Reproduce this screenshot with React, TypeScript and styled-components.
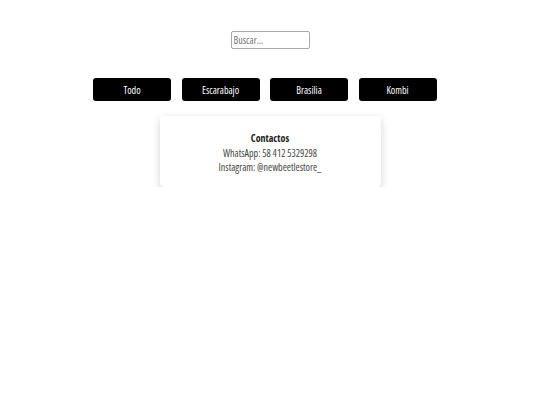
import React, { useState } from 'react';
import styled, { createGlobalStyle } from 'styled-components';

const GlobalStyle = createGlobalStyle`
    body {
        margin: 0;
        background: #fff;
        font-family: "Open Sans", "Liberation Sans", sans-serif;
        font-stretch: 75%;
    }
`;

const Page = styled.div`
    display: flex;
    flex-direction: column;
    align-items: center;
    padding-top: 31px;
`;

const SearchInput = styled.input`
    box-sizing: border-box;
    width: 79px;
    height: 18px;
    padding: 0 2px;
    border: 1px solid #a9a9a9;
    border-radius: 2px;
    font-family: inherit;
    font-stretch: 75%;
    font-size: 10px;
    color: #333;
    outline: none;
    &::placeholder {
        color: #757575;
    }
`;

const Filters = styled.div`
    display: flex;
    margin-top: 29px;
`;

const FilterButton = styled.button`
    width: 78px;
    height: 23px;
    margin-right: 10.5px;
    background: #000;
    color: #fff;
    border: none;
    border-radius: 3px;
    font-family: inherit;
    font-stretch: 75%;
    font-size: 10px;
    cursor: pointer;
`;

const Card = styled.div`
    box-sizing: border-box;
    width: 221px;
    height: 71px;
    margin-top: 15px;
    padding-top: 15px;
    background: #fff;
    border-radius: 4px;
    box-shadow: 0 3px 8px rgba(0, 0, 0, 0.18);
    text-align: center;
    font-size: 10px;
    color: #444;
`;

const CardTitle = styled.div`
    font-weight: 700;
    color: #222;
    line-height: 14.5px;
`;

const CardLine = styled.div`
    line-height: 14.5px;
`;

const categorias = ['Todo', 'Escarabajo', 'Brasilia', 'Kombi'];

const App = () => {
    const [busqueda, setBusqueda] = useState('');

    return (
        <>
            <GlobalStyle />
            <Page>
                <SearchInput
                    placeholder="Buscar..."
                    value={busqueda}
                    onChange={(e) => setBusqueda(e.target.value)}
                />
                <Filters>
                    {categorias.map((c) => (
                        <FilterButton key={c}>{c}</FilterButton>
                    ))}
                </Filters>
                <Card>
                    <CardTitle>Contactos</CardTitle>
                    <CardLine>WhatsApp: 58 412 5329298</CardLine>
                    <CardLine>Instagram: @newbeetlestore_</CardLine>
                </Card>
            </Page>
        </>
    );
};

export default App;
